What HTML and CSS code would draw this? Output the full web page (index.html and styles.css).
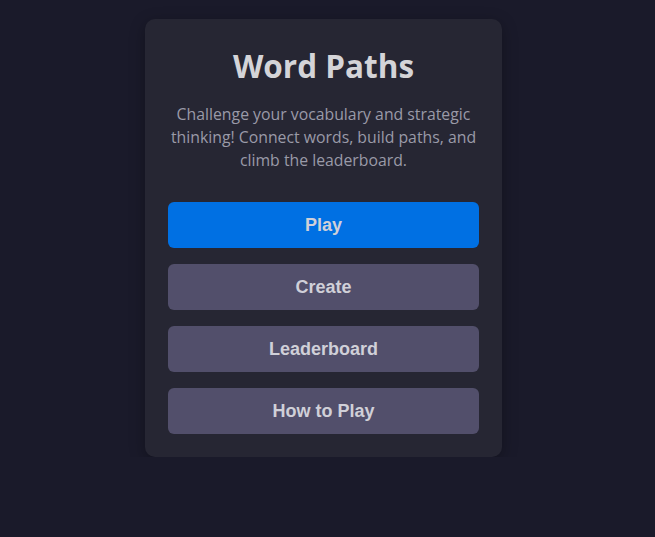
FILE: index.html
```html
<!DOCTYPE html>
<html>
<head>
  <meta charset="UTF-8">
  <title>Word Paths</title>
  <link rel="stylesheet" href="styles.css">
</head>
<body>
  <div class="page">
    <div class="menu-card">
      <h1>Word Paths</h1>
      <p class="tagline">Challenge your vocabulary and strategic thinking! Connect words, build paths, and climb the leaderboard.</p>
      <div class="menu-buttons">
        <button class="primary">Play</button>
        <button>Create</button>
        <button>Leaderboard</button>
        <button>How to Play</button>
      </div>
    </div>
  </div>
</body>
</html>
```

FILE: styles.css
```css
body {
  margin: 0;
  background: #1a1a2a;
  font-family: "Open Sans", "Noto Sans", sans-serif;
}
.page {
  display: flex;
  justify-content: center;
  padding: 19px 8px 0 0;
}
.menu-card {
  width: 311px;
  padding: 23px;
  background: #262633;
  border-radius: 10px;
  box-shadow: 0 4px 16px rgba(0, 0, 0, 0.3);
  text-align: center;
}
.menu-card h1 {
  margin: 4px 0 17px 0;
  font-size: 31.5px;
  font-weight: bold;
  line-height: 40px;
  color: #d4d4d8;
}
.tagline {
  margin: 0 0 30px 0;
  font-size: 15.8px;
  line-height: 23px;
  color: #9a9aa8;
}
.menu-buttons {
  display: flex;
  flex-direction: column;
  gap: 16px;
}
button {
  height: 46px;
  border: none;
  border-radius: 6px;
  background: #524f6b;
  color: #d0d0d8;
  font-family: "Liberation Sans", Arial, sans-serif;
  font-size: 18px;
  font-weight: bold;
  cursor: pointer;
}
button:hover {
  background: #5c5978;
}
button.primary {
  background: #0070e3;
}
button.primary:hover {
  background: #0062c8;
}
```
